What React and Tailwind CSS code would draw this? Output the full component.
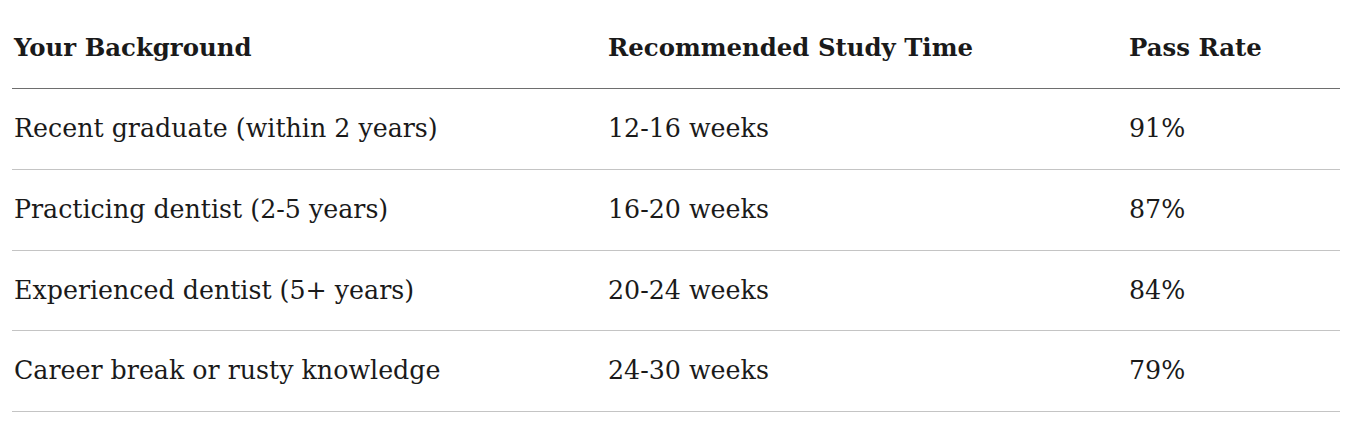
export default function App() {
  const rows = [
    ["Recent graduate (within 2 years)", "12-16 weeks", "91%", "h-[81px]"],
    ["Practicing dentist (2-5 years)", "16-20 weeks", "87%", "h-[81px]"],
    ["Experienced dentist (5+ years)", "20-24 weeks", "84%", "h-[80px]"],
    ["Career break or rusty knowledge", "24-30 weeks", "79%", "h-[81px]"],
  ];
  return (
    <div className="w-[1366px] h-[426px] bg-white pt-[8px] px-[12px] text-[#1a1a1a] [font-family:'DejaVu_Serif','Liberation_Serif',serif]">
      <div className="w-[1328px]">
        <div className="grid grid-cols-[594px_521px_213px] h-[81px] items-center border-b border-[#6e6e6e] text-[24.4px] font-bold">
          <div className="pl-[2px]">Your Background</div>
          <div className="pl-[2px]">Recommended Study Time</div>
          <div className="pl-[2px]">Pass Rate</div>
        </div>
        {rows.map((r, i) => (
          <div key={i} className={`grid grid-cols-[594px_521px_213px] items-center border-b border-[#c4c4c4] text-[25.3px] ${r[3]}`}>
            <div className="pl-[2px]">{r[0]}</div>
            <div className="pl-[2px]">{r[1]}</div>
            <div className="pl-[2px]">{r[2]}</div>
          </div>
        ))}
      </div>
    </div>
  );
}
